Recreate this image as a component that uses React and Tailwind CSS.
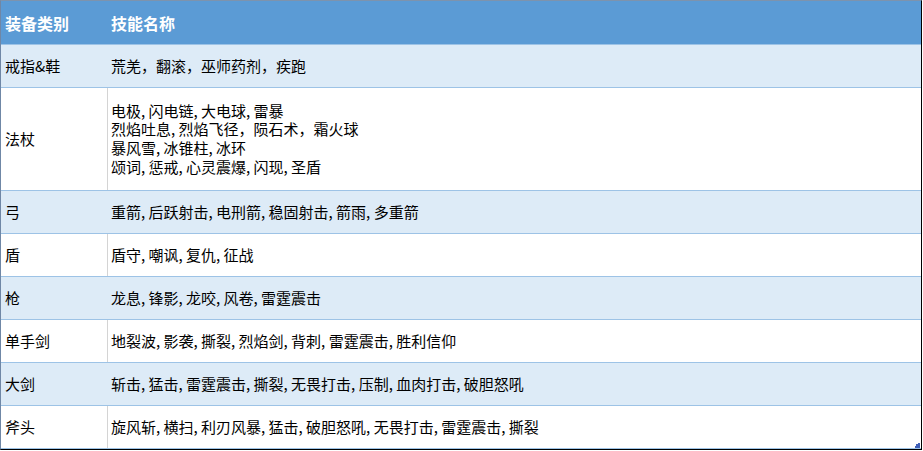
import React from 'react';

const rows = [
  { type: '戒指&鞋', skills: ['荒羌，翻滚，巫师药剂，疾跑'], shade: true },
  {
    type: '法杖',
    skills: [
      '电极, 闪电链, 大电球, 雷暴',
      '烈焰吐息, 烈焰飞径，陨石术，霜火球',
      '暴风雪, 冰锥柱, 冰环',
      '颂词, 惩戒, 心灵震爆, 闪现, 圣盾',
    ],
    shade: false,
    tall: true,
  },
  { type: '弓', skills: ['重箭, 后跃射击, 电刑箭, 稳固射击, 箭雨, 多重箭'], shade: true },
  { type: '盾', skills: ['盾守, 嘲讽, 复仇, 征战'], shade: false },
  { type: '枪', skills: ['龙息, 锋影, 龙咬, 风卷, 雷霆震击'], shade: true },
  { type: '单手剑', skills: ['地裂波, 影袭, 撕裂, 烈焰剑, 背刺, 雷霆震击, 胜利信仰'], shade: false },
  { type: '大剑', skills: ['斩击, 猛击, 雷霆震击, 撕裂, 无畏打击, 压制, 血肉打击, 破胆怒吼'], shade: true },
  { type: '斧头', skills: ['旋风斩, 横扫, 利刃风暴, 猛击, 破胆怒吼, 无畏打击, 雷霆震击, 撕裂'], shade: false },
];

export default function App() {
  return (
    <div className="w-[923px] h-[451px] bg-white" style={{ fontFamily: '"Noto Sans CJK SC", "Noto Sans", sans-serif' }}>
      <div className="relative w-[922px] h-[450px] border border-t-[#7d93ad] border-l-[#6f87a6] border-r-black border-b-black flex flex-col">
        <div className="flex h-[44px] shrink-0 bg-[#5b9bd5] border-b border-[#9dc3e6] text-white font-bold text-[16px]">
          <div className="w-[106px] flex items-center pl-[4px] pt-[1px]">装备类别</div>
          <div className="flex-1 flex items-center pl-[4px] pt-[1px]">技能名称</div>
        </div>
        {rows.map((r) => (
          <div
            key={r.type}
            className={`flex shrink-0 border-b border-[#9dc3e6] text-[15px] text-black ${r.tall ? 'h-[103px]' : 'h-[43px]'} ${r.shade ? 'bg-[#ddebf7]' : 'bg-white'}`}
          >
            <div className="w-[106px] flex items-center pl-[4px]">{r.type}</div>
            <div className={`flex-1 flex flex-col justify-center pl-[3px] leading-[18.7px] border-l ${r.shade ? 'border-[#ddebf7]' : 'border-[#d4d4d4]'}`}>
              {r.skills.map((s) => (
                <div key={s} className="whitespace-nowrap">{s}</div>
              ))}
            </div>
          </div>
        ))}
        <div className="absolute right-[1px] bottom-[1px] w-[5px] h-[5px]">
          <div className="absolute right-0 bottom-0 w-[5px] h-[2px] bg-[#4060b8]" />
          <div className="absolute right-0 bottom-0 w-[2px] h-[5px] bg-[#4060b8]" />
          <div className="absolute right-0 bottom-0 w-[4px] h-[4px] bg-[#4060b8]" />
        </div>
      </div>
    </div>
  );
}
